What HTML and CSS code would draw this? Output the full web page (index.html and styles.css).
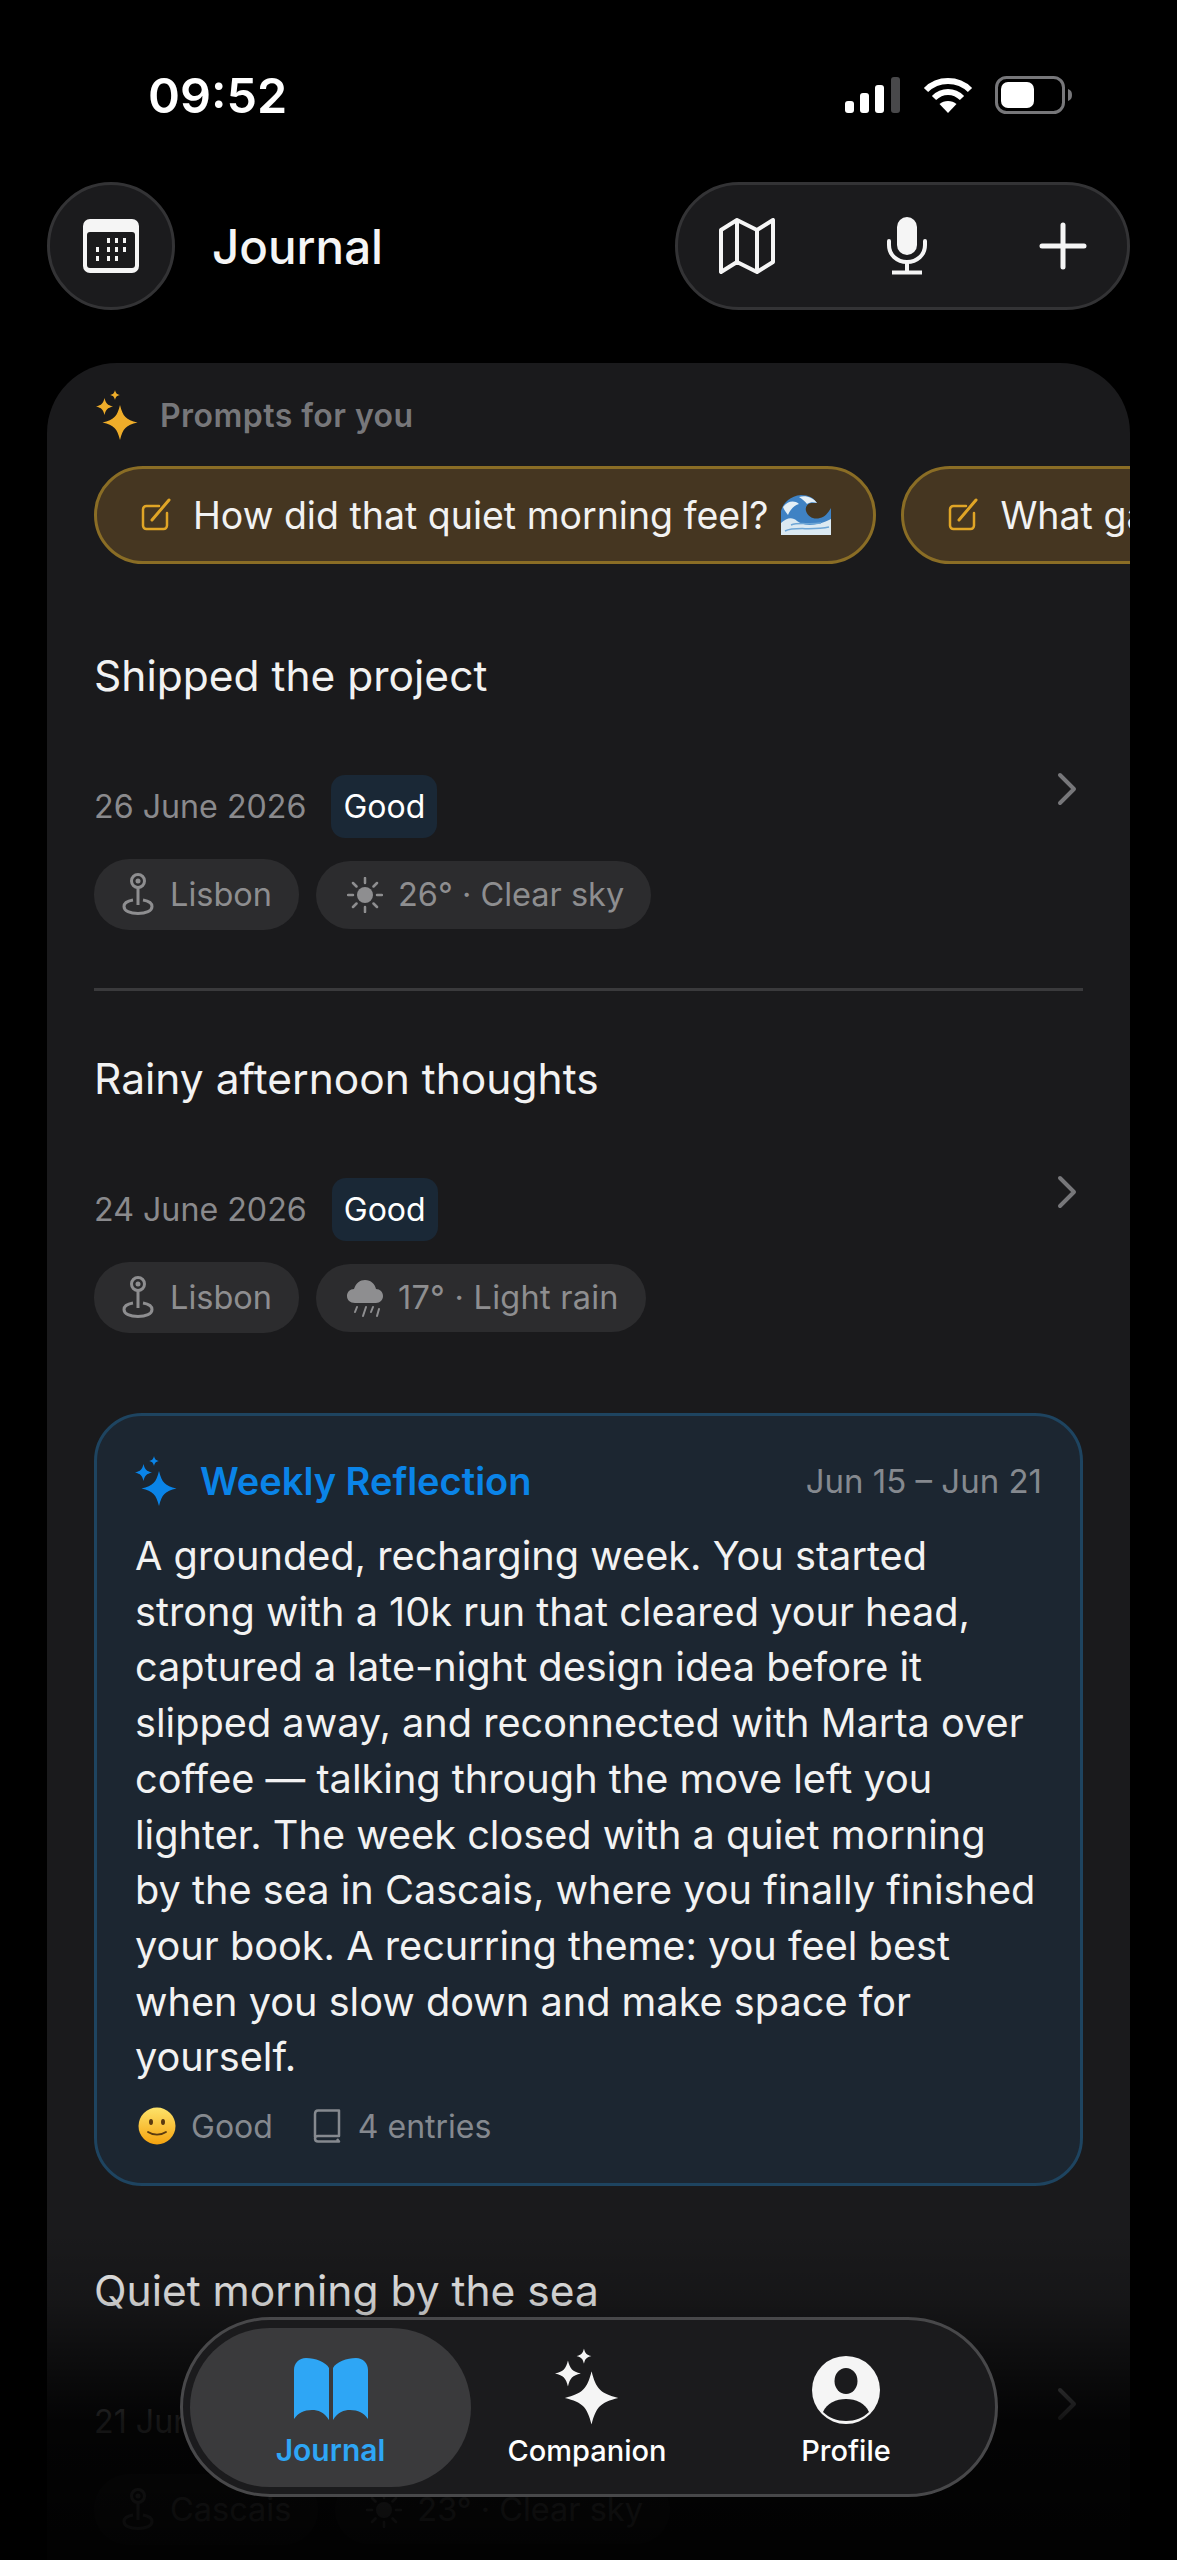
FILE: index.html
```html
<!DOCTYPE html>
<html lang="en">

<head>
    <meta charset="UTF-8">
    <title>Journal</title>
    <link rel="stylesheet" href="styles.css">
</head>

<body>
    <svg class="defs" width="0" height="0">
        <symbol id="star" viewBox="0 0 24 24">
            <path d="M12 0C14 8 16 10 24 12C16 14 14 16 12 24C10 16 8 14 0 12C8 10 10 8 12 0Z" />
        </symbol>
        <symbol id="sparkle" viewBox="0 0 42 50">
            <use href="#star" x="0" y="8" width="17" height="17" />
            <use href="#star" x="14" y="0" width="10" height="10" />
            <use href="#star" x="6" y="15" width="36" height="35" />
        </symbol>
        <symbol id="pin" viewBox="0 0 32 44" fill="none" stroke="currentColor" stroke-width="3">
            <circle cx="16" cy="8" r="6.5" />
            <circle cx="16" cy="8" r="2.5" fill="currentColor" stroke="none" />
            <path d="M16 15V32" />
            <path d="M11 27C5 28 2 30 2 33.500C2 38 8 40.500 16 40.500S30 38 30 33.500C30 30 27 28 21 27" />
        </symbol>
        <symbol id="sun" viewBox="0 0 36 36" stroke="currentColor" stroke-width="2.500" stroke-linecap="round">
            <circle cx="18" cy="18" r="8" fill="currentColor" stroke="none" />
            <path d="M18 1V6M18 30V35M1 18H6M30 18H35M6 6L9.500 9.500M26.500 26.500L30 30M30 6L26.500 9.500M9.500 26.500L6 30" />
        </symbol>
        <symbol id="edit" viewBox="0 0 30 34" fill="none" stroke="#e0a526" stroke-width="2.500" stroke-linecap="round">
            <path d="M18 8H5.500C3.500 8 2 9.500 2 11.500V27.500C2 29.500 3.500 31 5.500 31H22.500C24.500 31 26 29.500 26 27.500V15" />
            <path d="M11 22L28 2" stroke-width="3" />
        </symbol>
        <symbol id="chevron" viewBox="0 0 20 34" fill="none" stroke="currentColor" stroke-width="4" stroke-linecap="round" stroke-linejoin="round">
            <path d="M3 3L17 17L3 31" />
        </symbol>
    </svg>

    <div class="status">
        <span class="time">09:52</span>
        <div class="status_icons">
            <svg class="signal" viewBox="0 0 56 36">
                <rect x="0" y="24" width="9" height="12" rx="3" fill="#fff" />
                <rect x="15" y="16" width="9" height="20" rx="3" fill="#fff" />
                <rect x="30" y="8" width="9" height="28" rx="3" fill="#fff" />
                <rect x="46" y="0" width="9" height="36" rx="3" fill="#48484a" />
            </svg>
            <svg class="wifi" viewBox="0 0 50 36" fill="none" stroke="#fff" stroke-width="6">
                <path d="M3 13C15 1 35 1 47 13" />
                <path d="M11 21C19 13 31 13 39 21" />
                <path d="M25 36L16.500 27C21 23 29 23 33.500 27Z" fill="#fff" stroke="none" />
            </svg>
            <svg class="battery" viewBox="0 0 78 38">
                <rect x="1.500" y="1.500" width="67" height="35" rx="10" fill="none" stroke="#77777a" stroke-width="3" />
                <rect x="6" y="6" width="33" height="26" rx="7" fill="#fff" />
                <path d="M73 13C76 14 77 16 77 19S76 24 73 25Z" fill="#77777a" />
            </svg>
        </div>
    </div>

    <header class="header">
        <div class="round_btn">
            <svg class="calendar" viewBox="0 0 56 54">
                <rect width="56" height="54" rx="7" fill="#f5f5f5" />
                <rect x="4" y="13" width="48" height="36" rx="3" fill="#1a1a1c" />
                <g fill="#f5f5f5">
                    <rect x="24" y="19" width="3" height="5" />
                    <rect x="32" y="19" width="3" height="5" />
                    <rect x="40" y="19" width="3" height="5" />
                    <rect x="13" y="28" width="3" height="5" />
                    <rect x="24" y="28" width="3" height="5" />
                    <rect x="32" y="28" width="3" height="5" />
                    <rect x="40" y="28" width="3" height="5" />
                    <rect x="13" y="37" width="3" height="5" />
                    <rect x="24" y="37" width="3" height="5" />
                    <rect x="32" y="37" width="3" height="5" />
                </g>
            </svg>
        </div>
        <h1 class="page_title">Journal</h1>
        <div class="action_pill">
            <svg class="map_icon" viewBox="0 0 56 56" fill="none" stroke="#f5f5f5" stroke-width="4" stroke-linejoin="round">
                <path d="M2 12L18 2L38 12L54 2V44L38 54L18 44L2 54Z" />
                <path d="M18 2V44M38 12V54" />
            </svg>
            <svg class="mic_icon" viewBox="0 0 40 58" fill="none" stroke="#f5f5f5" stroke-width="4">
                <rect x="10" y="0" width="20" height="38" rx="10" fill="#f5f5f5" stroke="none" />
                <path d="M2 24V28C2 38 10 45 20 45S38 38 38 28V24" stroke-linecap="round" />
                <path d="M20 45V54M7 55.500H33" stroke-linecap="square" />
            </svg>
            <svg class="plus_icon" viewBox="0 0 48 48" stroke="#f5f5f5" stroke-width="5" stroke-linecap="round">
                <path d="M24 3V45M3 24H45" />
            </svg>
        </div>
    </header>

    <main class="card">
        <div class="prompts_head">
            <svg class="sparkle_gold"><use href="#sparkle" /></svg>
            <span>Prompts for you</span>
        </div>
        <div class="prompts">
            <div class="chip">
                <svg class="edit_icon"><use href="#edit" /></svg>
                <span>How did that quiet morning feel?</span>
                <svg class="wave" viewBox="0 0 50 40">
                    <path d="M0 40V16C2 8 9 1 20 0C28 0 33 3 36 8L30 8C26 9 24 12 25 16C27 22 33 25 39 23C44 22 47 18 50 13V40Z" fill="#3f82c4" />
                    <path d="M0 40V28C6 22 12 22 16 26C22 31 34 32 50 24V40Z" fill="#dbe9f2" />
                    <path d="M2 12C7 6 13 5 18 9C14 10 10 13 7 20C5 17 3 15 2 12Z" fill="#e4eff6" />
                    <path d="M18 2C24 0 32 2 36 8C33 7 29 7 26 9C24 6 21 4 18 2Z" fill="#e4eff6" />
                    <path d="M4 36C14 31 30 36 48 32M10 30C18 27 28 30 40 28" fill="none" stroke="#6ea6d6" stroke-width="1.500" />
                </svg>
            </div>
            <div class="chip">
                <svg class="edit_icon"><use href="#edit" /></svg>
                <span>What gave you energy today?</span>
            </div>
        </div>

        <article class="entry entry_line">
            <h2 class="entry_title">Shipped the project</h2>
            <div class="entry_row">
                <span class="entry_date">26 June 2026</span>
                <span class="mood">Good</span>
                <svg class="chevron"><use href="#chevron" /></svg>
            </div>
            <div class="tags">
                <span class="tag tag_place"><svg class="tag_pin"><use href="#pin" /></svg>Lisbon</span>
                <span class="tag"><svg class="tag_weather"><use href="#sun" /></svg>26° · Clear sky</span>
            </div>
        </article>

        <article class="entry">
            <h2 class="entry_title">Rainy afternoon thoughts</h2>
            <div class="entry_row">
                <span class="entry_date">24 June 2026</span>
                <span class="mood">Good</span>
                <svg class="chevron"><use href="#chevron" /></svg>
            </div>
            <div class="tags">
                <span class="tag tag_place"><svg class="tag_pin"><use href="#pin" /></svg>Lisbon</span>
                <span class="tag tag_rain">
                    <svg class="tag_weather" viewBox="0 0 36 40" fill="currentColor" stroke="currentColor">
                        <path d="M8 25C3 25 0 22 0 18C0 14 3 11 7 11C9 5 13 2 18 2C24 2 28 6 29 11C33 11 36 14 36 18C36 22 33 25 29 25Z" stroke="none" />
                        <path d="M8 34L10 29M16 38L19 29M24 34L26 29M30 38L32 31" stroke-width="2" stroke-linecap="round" />
                    </svg>17° · Light rain</span>
            </div>
        </article>

        <section class="reflection">
            <div class="reflection_head">
                <svg class="sparkle_blue"><use href="#sparkle" /></svg>
                <span class="reflection_title">Weekly Reflection</span>
                <span class="reflection_range">Jun 15 – Jun 21</span>
            </div>
            <p class="reflection_text">A grounded, recharging week. You started<br>strong with a 10k run that cleared your head,<br>captured a late-night design idea before it<br>slipped away, and reconnected with Marta over<br>coffee — talking through the move left you<br>lighter. The week closed with a quiet morning<br>by the sea in Cascais, where you finally finished<br>your book. A recurring theme: you feel best<br>when you slow down and make space for<br>yourself.</p>
            <div class="reflection_foot">
                <svg class="smile" viewBox="0 0 38 38">
                    <defs>
                        <linearGradient id="smile_fill" x1="0" y1="0" x2="0" y2="1">
                            <stop offset="0" stop-color="#fde36a" />
                            <stop offset="1" stop-color="#f5a30f" />
                        </linearGradient>
                    </defs>
                    <circle cx="19" cy="19" r="18.500" fill="url(#smile_fill)" />
                    <ellipse cx="13" cy="15" rx="2" ry="3" fill="#5a3a10" />
                    <ellipse cx="25" cy="15" rx="2" ry="3" fill="#5a3a10" />
                    <path d="M10 25C15 28.500 23 28.500 28 25" fill="none" stroke="#5a3a10" stroke-width="1.800" stroke-linecap="round" />
                </svg>
                <span class="foot_mood">Good</span>
                <svg class="book_small" viewBox="0 0 28 34" fill="none" stroke="currentColor" stroke-width="2.500" stroke-linejoin="round">
                    <path d="M2 28V5C2 3 3 1.500 5 1.500H26V27H5C3 27 2 28 2 29.500C2 31 3 32.500 5 32.500H26L24 30" />
                </svg>
                <span>4 entries</span>
            </div>
        </section>

        <article class="entry entry_last">
            <h2 class="entry_title">Quiet morning by the sea</h2>
            <div class="entry_row">
                <span class="entry_date">21 June 2026</span>
                <span class="mood">Good</span>
                <svg class="chevron"><use href="#chevron" /></svg>
            </div>
            <div class="tags">
                <span class="tag tag_place"><svg class="tag_pin"><use href="#pin" /></svg>Cascais</span>
                <span class="tag"><svg class="tag_weather"><use href="#sun" /></svg>23° · Clear sky</span>
            </div>
        </article>
    </main>

    <div class="fade"></div>

    <nav class="tabbar">
        <div class="tab tab_active">
            <svg class="tab_book" viewBox="0 0 78 62" fill="#2ea6f5">
                <path d="M2 12C2 5 7 0 14 0C23 0 34 4 37 10V62C32 54 26 52 20 52C12 52 6 55 2 61Z" />
                <path d="M76 12C76 5 71 0 64 0C55 0 44 4 41 10V62C46 54 52 52 58 52C66 52 72 55 76 61Z" />
            </svg>
            <span>Journal</span>
        </div>
        <div class="tab tab_mid">
            <svg class="tab_sparkle"><use href="#sparkle" /></svg>
            <span>Companion</span>
        </div>
        <div class="tab">
            <svg class="tab_profile" viewBox="0 0 68 68">
                <circle cx="34" cy="34" r="34" fill="#f5f5f5" />
                <ellipse cx="34" cy="25" rx="11.500" ry="13" fill="#1b1b1d" />
                <path d="M11 56C15 47 24 43 34 43S53 47 57 56C51 62 43 65 34 65S17 62 11 56Z" fill="#1b1b1d" />
            </svg>
            <span>Profile</span>
        </div>
    </nav>
</body>

</html>
```

FILE: styles.css
```css
* {
    box-sizing: border-box;
}

html,
body {
    margin: 0;
    height: 2560px;
    overflow: hidden;
    background-color: #000;
}

body {
    position: relative;
    padding-top: 60px;
    font-family: Inter, "Liberation Sans", sans-serif;
    color: #f2f2f2;
}

.defs {
    position: absolute;
}

/* status bar */
.status {
    display: flex;
    align-items: center;
    justify-content: space-between;
    height: 70px;
    padding: 0 104px 0 148px;
}

.time {
    font-size: 48.5px;
    font-weight: 600;
    color: #fff;
}

.status_icons {
    display: flex;
    align-items: center;
    gap: 22px;
}

.signal {
    width: 56px;
    height: 36px;
}

.wifi {
    width: 50px;
    height: 36px;
}

.battery {
    width: 78px;
    height: 38px;
}

/* header */
.header {
    display: flex;
    align-items: center;
    height: 128px;
    margin-top: 52px;
    padding: 0 47px;
}

.round_btn {
    display: flex;
    align-items: center;
    justify-content: center;
    width: 128px;
    height: 128px;
    border-radius: 50%;
    background-color: #1b1b1d;
    border: 3px solid #333335;
}

.calendar {
    width: 56px;
    height: 54px;
}

.page_title {
    margin: 0 0 0 37px;
    font-size: 47.5px;
    font-weight: 500;
    color: #f5f5f5;
}

.action_pill {
    display: flex;
    align-items: center;
    justify-content: space-between;
    width: 455px;
    height: 128px;
    margin-left: auto;
    padding: 0 40px 0 41px;
    border-radius: 64px;
    background-color: #1b1b1d;
    border: 3px solid #333335;
}

.map_icon {
    width: 56px;
    height: 56px;
}

.mic_icon {
    width: 40px;
    height: 58px;
}

.plus_icon {
    width: 48px;
    height: 48px;
}

/* main card */
.card {
    height: 2197px;
    margin: 53px 47px 0;
    padding-top: 27px;
    border-radius: 70px 70px 0 0;
    background-color: #1a1a1c;
    overflow: hidden;
}

.prompts_head {
    display: flex;
    align-items: center;
    gap: 22px;
    height: 50px;
    padding-left: 49px;
    font-size: 32px;
    font-weight: 600;
    letter-spacing: 0.45px;
    color: #77777a;
}

.sparkle_gold {
    width: 42px;
    height: 50px;
    fill: #efad2a;
}

.prompts {
    display: flex;
    gap: 25px;
    margin-top: 26px;
    padding-left: 47px;
    overflow: hidden;
}

.chip {
    display: flex;
    flex-shrink: 0;
    align-items: center;
    height: 98px;
    padding: 0 42px 0 44px;
    border-radius: 49px;
    background-color: #453621;
    border: 3px solid #8a6d25;
    font-size: 37.5px;
    white-space: nowrap;
}

.edit_icon {
    width: 30px;
    height: 34px;
    margin-right: 22px;
    flex-shrink: 0;
}

.wave {
    width: 50px;
    height: 40px;
    margin-left: 13px;
}

/* entries */
.entry {
    padding: 60px 47px 59px;
}

.entry_line {
    position: relative;
    margin-top: 24px;
    padding-bottom: 61px;
}

.entry_line::after {
    content: "";
    position: absolute;
    left: 47px;
    right: 47px;
    bottom: 0;
    height: 3px;
    background-color: #3a3a3c;
}

.entry_title {
    margin: 0;
    font-size: 42.5px;
    font-weight: 400;
    line-height: 56px;
}

.entry_row {
    display: flex;
    align-items: center;
    height: 63px;
    margin-top: 71px;
}

.entry_date {
    font-size: 32.2px;
    color: #8a8a8d;
}

.mood {
    display: flex;
    align-items: center;
    height: 63px;
    margin-left: 25px;
    padding: 0 12px;
    border-radius: 14px;
    background-color: #1a2836;
    font-size: 32px;
    font-weight: 400;
    color: #fff;
}

.chevron {
    align-self: flex-start;
    width: 20px;
    height: 34px;
    margin: -3px 6px 0 auto;
    color: #77777a;
}

.tags {
    display: flex;
    align-items: center;
    gap: 17px;
    margin-top: 21px;
}

.tag {
    display: flex;
    align-items: center;
    height: 68px;
    padding: 0 27px 0 31px;
    border-radius: 35px;
    background-color: #2c2c2e;
    font-size: 32.5px;
    color: #8e8e90;
}

.tag_place {
    height: 71px;
    padding: 0 27px 0 28px;
}

.tag_pin {
    width: 32px;
    height: 44px;
    margin-right: 16px;
}

.tag_weather {
    width: 36px;
    height: 36px;
    margin-right: 15px;
}

.tag_rain {
    letter-spacing: 0.25px;
}

.tag_rain .tag_weather {
    height: 40px;
}

/* weekly reflection */
.reflection {
    height: 773px;
    margin: 21px 47px 0;
    padding: 32px 38px 0 38px;
    border-radius: 48px;
    background-color: #1c2631;
    border: 3px solid #1e4460;
}

.reflection_head {
    display: flex;
    align-items: center;
    height: 66px;
}

.sparkle_blue {
    width: 42px;
    height: 50px;
    margin-right: 23px;
    fill: #0a84e8;
}

.reflection_title {
    font-size: 38px;
    font-weight: 600;
    color: #0a84e8;
}

.reflection_range {
    margin-left: auto;
    font-size: 33px;
    color: #85898f;
}

.reflection_text {
    margin: 15px 0 0;
    font-size: 39.7px;
    line-height: 55.7px;
    color: #f2f2f2;
    white-space: nowrap;
}

.reflection_foot {
    display: flex;
    align-items: center;
    height: 40px;
    margin-top: 20px;
    font-size: 32px;
    color: #85898f;
}

.smile {
    width: 38px;
    height: 38px;
    margin: 0 15px 0 3px;
}

.foot_mood {
    margin-right: 40px;
}

.book_small {
    width: 28px;
    height: 34px;
    margin-right: 17px;
}

.entry_last {
    padding-top: 77px;
}

/* bottom fade + tab bar */
.fade {
    position: absolute;
    left: 0;
    right: 0;
    bottom: 0;
    height: 330px;
    background: linear-gradient(to bottom, rgba(0, 0, 0, 0), rgba(0, 0, 0, 0.15) 20%, rgba(0, 0, 0, 0.85) 58%, rgba(0, 0, 0, 0.94));
}

.tabbar {
    position: absolute;
    left: 180px;
    top: 2317px;
    display: flex;
    align-items: center;
    width: 818px;
    height: 180px;
    padding: 0 6px 0 7px;
    border-radius: 90px;
    background-color: #1b1b1d;
    border: 3px solid #48484a;
}

.tab {
    display: flex;
    flex: 1;
    flex-direction: column;
    align-items: center;
    justify-content: flex-end;
    height: 159px;
    padding-bottom: 19px;
    font-size: 29px;
    font-weight: 500;
    color: #fff;
}

.tab_active {
    flex: none;
    width: 281px;
    border-radius: 80px;
    background-color: #3a3a3c;
    font-size: 30px;
    font-weight: 600;
    color: #2ea6f5;
}

.tab_mid {
    flex: none;
    width: 232px;
}

.tab_book {
    width: 78px;
    height: 62px;
    margin-bottom: 12px;
}

.tab_sparkle {
    width: 64px;
    height: 77px;
    margin-bottom: 8px;
    fill: #f5f5f5;
}

.tab_profile {
    width: 68px;
    height: 68px;
    margin-bottom: 9px;
}
```
